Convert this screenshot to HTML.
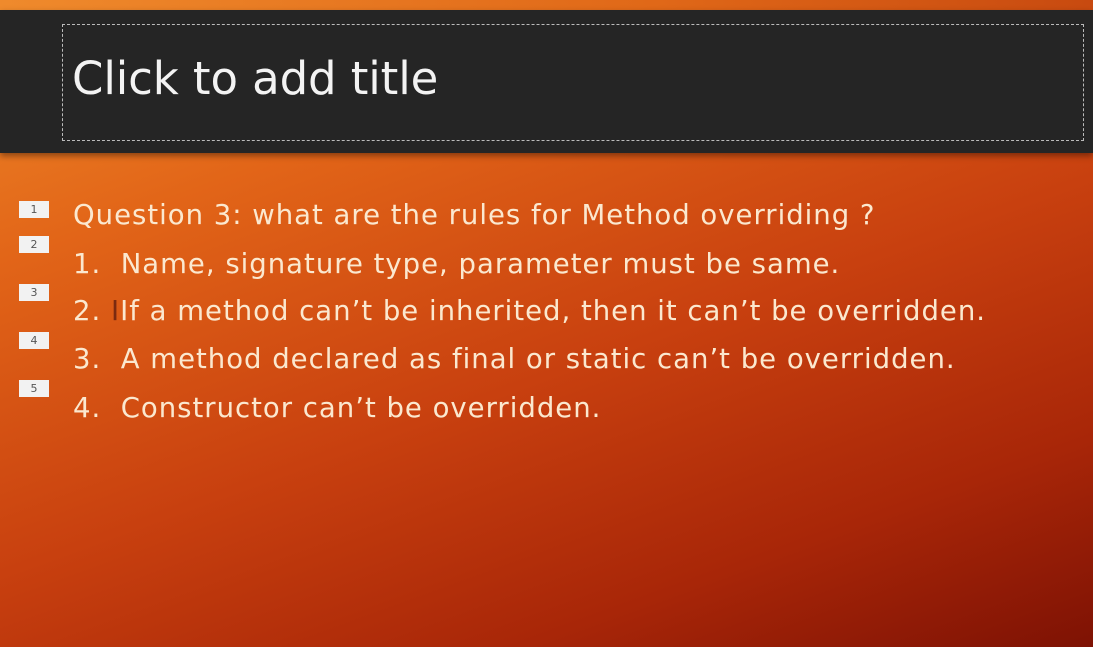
<!DOCTYPE html>
<html><head><style>
body{margin:0;width:1093px;height:647px;overflow:hidden;position:relative;font-family:"DejaVu Sans","Liberation Sans",sans-serif;
background:linear-gradient(160deg,#ee8a2a 0%,#e26518 25%,#c8400f 55%,#a82608 80%,#7e1204 100%);}
.top{position:absolute;left:0;top:0;width:1093px;height:10px;background:linear-gradient(90deg,#ef8a2c,#e06818 60%,#c84a10);}
.band{position:absolute;left:0;top:10px;width:1093px;height:143px;background:#252525;box-shadow:0 3px 6px rgba(0,0,0,.4);}
.tbox{position:absolute;left:62px;top:24px;width:1020px;height:115px;border:1px dashed #bbb;}
.title{position:absolute;left:72px;top:53px;color:#f3f3f3;font-size:45px;line-height:52px;letter-spacing:-0.1px}
.box{position:absolute;left:19px;width:30px;height:17px;background:#f2f2f2;color:#555;font-size:11px;text-align:center;line-height:17px}
.l{position:absolute;left:73px;color:#fbe8cf;font-size:27.5px;line-height:30px;white-space:nowrap;letter-spacing:1px}
</style></head><body>
<div class="top"></div>
<div class="band"></div>
<div class="tbox"></div>
<div class="title">Click to add title</div>
<div class="box" style="top:201px">1</div>
<div class="box" style="top:236px">2</div>
<div class="box" style="top:284px">3</div>
<div class="box" style="top:332px">4</div>
<div class="box" style="top:380px">5</div>
<div class="l" style="top:200px">Question 3: what are the rules for Method overriding ?</div>
<div class="l" style="top:249px">1.&nbsp; Name, signature type, parameter must be same.</div>
<div class="l" style="top:296px">2. <span style="color:#7a2a10">I</span>If a method can’t be inherited, then it can’t be overridden.</div>
<div class="l" style="top:344px">3.&nbsp; A method declared as final or static can’t be overridden.</div>
<div class="l" style="top:393px">4.&nbsp; Constructor can’t be overridden.</div>
</body></html>
